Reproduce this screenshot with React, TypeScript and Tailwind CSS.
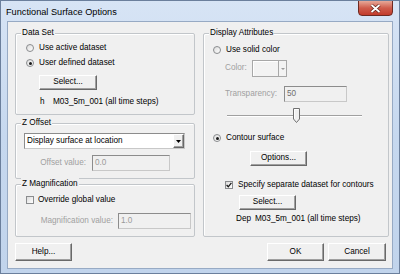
import React from 'react';

const Radio: React.FC<{ checked?: boolean }> = ({ checked }) => (
  <div className="w-[8px] h-[8px] rounded-full border border-[#8a8c8e] bg-gradient-to-br from-[#dcdcdc] to-white flex items-center justify-center shrink-0">
    {checked && <div className="w-[3px] h-[3px] rounded-full bg-[#1a1a1a]" />}
  </div>
);

const Check: React.FC<{ checked?: boolean }> = ({ checked }) => (
  <div className="w-[8px] h-[8px] border border-[#8a8c8e] bg-gradient-to-br from-[#dcdcdc] to-white flex items-center justify-center shrink-0">
    {checked && (
      <svg width="6" height="6" viewBox="0 0 6 6">
        <path d="M0.6 3 L2.3 4.8 L5.4 0.9" fill="none" stroke="#1a1a1a" strokeWidth="1.3" />
      </svg>
    )}
  </div>
);

const Btn: React.FC<{ className?: string; children: React.ReactNode }> = ({ className, children }) => (
  <div
    className={
      'flex items-center justify-center bg-[#f0f0f0] border border-t-white border-l-white border-r-[#696969] border-b-[#696969] shadow-[inset_-1px_-1px_0_#a0a0a0] text-black ' +
      (className ?? '')
    }
  >
    {children}
  </div>
);

const Group: React.FC<{ label: string; className?: string; children?: React.ReactNode }> = ({ label, className, children }) => (
  <div className={'relative border border-[#c2c6ca] rounded-[2px] shadow-[inset_1px_1px_0_white] flex flex-col ' + (className ?? '')}>
    <span className="absolute left-[5px] -top-[7px] px-[1px] bg-[#f0f0f0] leading-[12px]">{label}</span>
    {children}
  </div>
);

const Field: React.FC<{ className?: string; value: string; dark?: boolean }> = ({ className, value, dark }) => (
  <div
    className={
      'bg-[#f0f0f0] border border-[#c8c8c8] border-t-[#8c8c8c] border-l-[#8c8c8c] flex items-center pl-[2px] ' +
      (dark ? 'text-[#6d6d6d] ' : 'text-[#9a9a9a] ') +
      (className ?? '')
    }
  >
    {value}
  </div>
);

export default function App() {
  return (
    <div className="w-[400px] h-[274px] bg-gradient-to-b from-[#d7e4f5] via-[#c6d8ef] to-[#c1d4ec] border border-[#6b7f9c] flex flex-col font-['Liberation_Sans',Arial,sans-serif] text-[8.2px] text-black overflow-hidden">
      {/* title bar */}
      <div className="h-[20px] flex justify-between shrink-0">
        <div className="pl-[5px] pt-[5px] text-[9.2px] leading-[12px]">Functional Surface Options</div>
        <div className="mr-[6px] -mt-px w-[35px] h-[16px] rounded-b-[4px] border border-[#6e2a22] bg-gradient-to-b from-[#e6a899] via-[#cf5c4c] to-[#c23b2b] flex items-center justify-center">
          <svg width="11" height="9" viewBox="0 0 11 9">
            <path d="M1.5 1 L9.5 8 M9.5 1 L1.5 8" stroke="#5a2018" strokeWidth="3.2" />
            <path d="M1.5 1 L9.5 8 M9.5 1 L1.5 8" stroke="white" strokeWidth="1.8" />
          </svg>
        </div>
      </div>

      {/* client area */}
      <div className="ml-[6px] w-[386px] h-[248px] border border-[#97aac4] bg-[#f0f0f0] flex flex-col pl-[7px] pr-[3px] pt-[11px]">
        <div className="flex gap-[8px]">
          {/* left column */}
          <div className="w-[180px] flex flex-col">
            <Group label="Data Set" className="h-[82px]">
              <div className="mt-[8px] ml-[10px] h-[12px] flex items-center gap-[5px]">
                <Radio />
                <span>Use active dataset</span>
              </div>
              <div className="mt-[3px] ml-[10px] h-[12px] flex items-center gap-[5px]">
                <Radio checked />
                <span>User defined dataset</span>
              </div>
              <Btn className="mt-[6px] ml-[23px] w-[58px] h-[15px]">Select...</Btn>
              <div className="mt-[6px] ml-[24px] h-[12px] flex items-center">
                <span className="w-[13px]">h</span>
                <span>M03_5m_001 (all time steps)</span>
              </div>
            </Group>

            <Group label="Z Offset" className="mt-[8px] h-[56px]">
              <div className="mt-[9px] ml-[8px] w-[161px] h-[16px] bg-white border border-[#c8c8c8] border-t-[#8c8c8c] border-l-[#8c8c8c] flex items-center">
                <span className="flex-1 pl-[2px]">Display surface at location</span>
                <Btn className="w-[11px] h-[14px]">
                  <svg width="5" height="3" viewBox="0 0 5 3">
                    <path d="M0 0 H5 L2.5 3 Z" fill="black" />
                  </svg>
                </Btn>
              </div>
              <div className="mt-[6px] flex items-center">
                <span className="w-[70px] text-right text-[#a0a0a0]">Offset value:</span>
                <Field className="ml-[6px] w-[78px] h-[16px]" value="0.0" />
              </div>
            </Group>

            <Group label="Z Magnification" className="mt-[5px] h-[53px]">
              <div className="mt-[9px] ml-[10px] h-[12px] flex items-center gap-[4px]">
                <Check />
                <span>Override global value</span>
              </div>
              <div className="mt-[7px] flex items-center">
                <span className="w-[97px] text-right text-[#a0a0a0]">Magnification value:</span>
                <Field className="ml-[5px] w-[73px] h-[16px]" value="1.0" />
              </div>
            </Group>
          </div>

          {/* right column */}
          <Group label="Display Attributes" className="w-[186px] h-[204px]">
            <div className="mt-[10px] ml-[9px] h-[12px] flex items-center gap-[5px]">
              <Radio />
              <span>Use solid color</span>
            </div>
            <div className="mt-[4px] ml-[21px] flex items-center">
              <span className="w-[27px] text-[#a0a0a0]">Color:</span>
              <div className="w-[27px] h-[17px] border border-[#a8a8a8] bg-[#f3f3f3] shadow-[inset_1px_1px_0_white]" />
              <div className="w-[8px] h-[17px] border border-l-0 border-[#a8a8a8] bg-[#f3f3f3] flex items-center justify-center">
                <svg width="4" height="2" viewBox="0 0 4 2">
                  <path d="M0 0 H4 L2 2 Z" fill="#9a9a9a" />
                </svg>
              </div>
            </div>
            <div className="mt-[9px] ml-[21px] flex items-center">
              <span className="w-[59px] text-[#a0a0a0]">Transparency:</span>
              <Field className="w-[63px] h-[16px]" value="50" dark />
            </div>
            <div className="mt-[6px] ml-[23px] w-[135px] h-[15px] relative flex items-center">
              <div className="w-full h-[2px] border-t border-t-[#a0a0a0] border-b border-b-white" />
              <svg className="absolute left-[66px] top-0" width="7" height="15" viewBox="0 0 7 15">
                <path d="M0.5 0.5 H6.5 V11 L3.5 14.5 L0.5 11 Z" fill="#f0f0f0" stroke="#707070" strokeWidth="1" />
                <path d="M1.5 1.5 H5.5 M1.5 1.5 V10.5" stroke="white" strokeWidth="1" />
              </svg>
            </div>
            <div className="mt-[9px] ml-[9px] h-[12px] flex items-center gap-[5px]">
              <Radio checked />
              <span>Contour surface</span>
            </div>
            <Btn className="mt-[7px] ml-[46px] w-[57px] h-[15px]">Options...</Btn>
            <div className="mt-[13px] ml-[21px] h-[12px] flex items-center gap-[5px]">
              <Check checked />
              <span>Specify separate dataset for contours</span>
            </div>
            <Btn className="mt-[4px] ml-[35px] w-[57px] h-[15px]">Select...</Btn>
            <div className="mt-[3px] ml-[32px] h-[12px] flex items-center">
              <span className="w-[19px]">Dep</span>
              <span>M03_5m_001 (all time steps)</span>
            </div>
          </Group>
        </div>

        {/* bottom buttons */}
        <div className="mt-[6px] flex items-center">
          <Btn className="w-[57px] h-[18px]">Help...</Btn>
          <div className="flex-1" />
          <Btn className="w-[57px] h-[18px]">OK</Btn>
          <Btn className="ml-[4px] mr-[3px] w-[58px] h-[18px]">Cancel</Btn>
        </div>
      </div>
    </div>
  );
}
